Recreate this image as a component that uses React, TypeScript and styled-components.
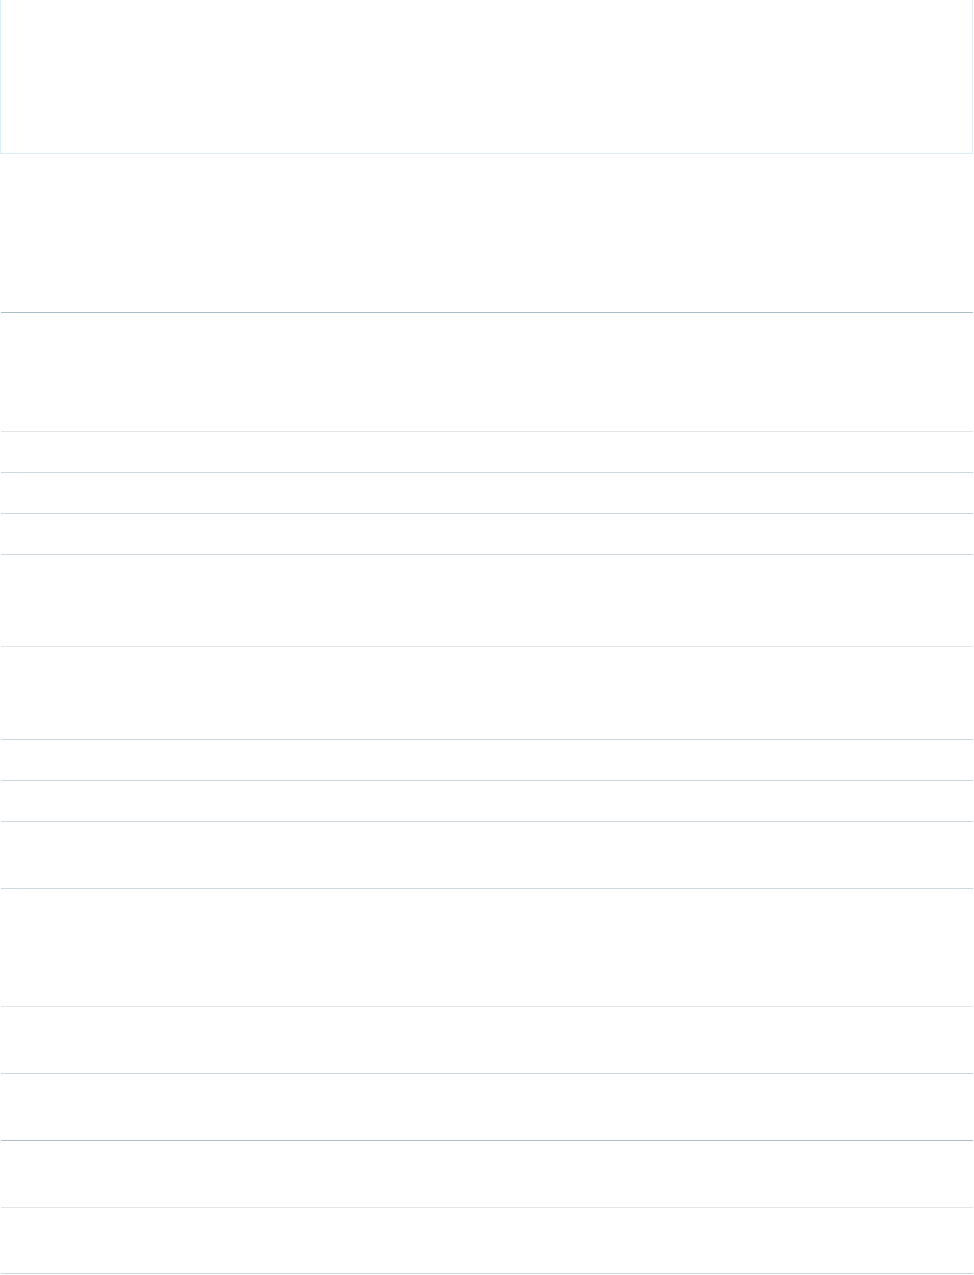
import { createGlobalStyle } from 'styled-components';
import styled from 'styled-components';

const GlobalStyle = createGlobalStyle`
  html, body {
    margin: 0;
    padding: 0;
    background: #ffffff;
    font-family: 'Liberation Sans', Arial, sans-serif;
  }
`;

const Page = styled.div`
  width: 974px;
  min-height: 1275px;
  display: flex;
  flex-direction: column;
`;

const Banner = styled.header`
  box-sizing: border-box;
  height: 154px;
  border: 1px solid #dceef9;
  border-top: none;
  margin-right: 1px;
`;

const Spacer = styled.div`
  height: 158px;
`;

const List = styled.div`
  display: flex;
  flex-direction: column;
  margin: 0 1px;
`;

type Tone = 'dark' | 'mid' | 'light';

const toneColor: Record<Tone, string> = {
  dark: '#abbfcb',
  mid: '#cfd8dd',
  light: '#e2e6e7',
};

const Row = styled.div<{ $h: number; $tone: Tone; $last?: Tone }>`
  box-sizing: border-box;
  height: ${(p) => p.$h}px;
  border-top: 1px solid ${(p) => toneColor[p.$tone]};
  ${(p) => (p.$last ? `border-bottom: 1px solid ${toneColor[p.$last]};` : '')}
`;

const rows: { h: number; tone: Tone }[] = [
  { h: 119, tone: 'dark' },
  { h: 41, tone: 'light' },
  { h: 41, tone: 'mid' },
  { h: 41, tone: 'mid' },
  { h: 92, tone: 'mid' },
  { h: 93, tone: 'light' },
  { h: 41, tone: 'mid' },
  { h: 41, tone: 'mid' },
  { h: 67, tone: 'mid' },
  { h: 118, tone: 'mid' },
  { h: 67, tone: 'light' },
  { h: 67, tone: 'mid' },
  { h: 67, tone: 'dark' },
  { h: 67, tone: 'light' },
];

export default function App() {
  return (
    <Page>
      <GlobalStyle />
      <Banner />
      <Spacer />
      <List>
        {rows.map((r, i) => (
          <Row
            key={i}
            $h={r.h}
            $tone={r.tone}
            $last={i === rows.length - 1 ? 'mid' : undefined}
          />
        ))}
      </List>
    </Page>
  );
}
